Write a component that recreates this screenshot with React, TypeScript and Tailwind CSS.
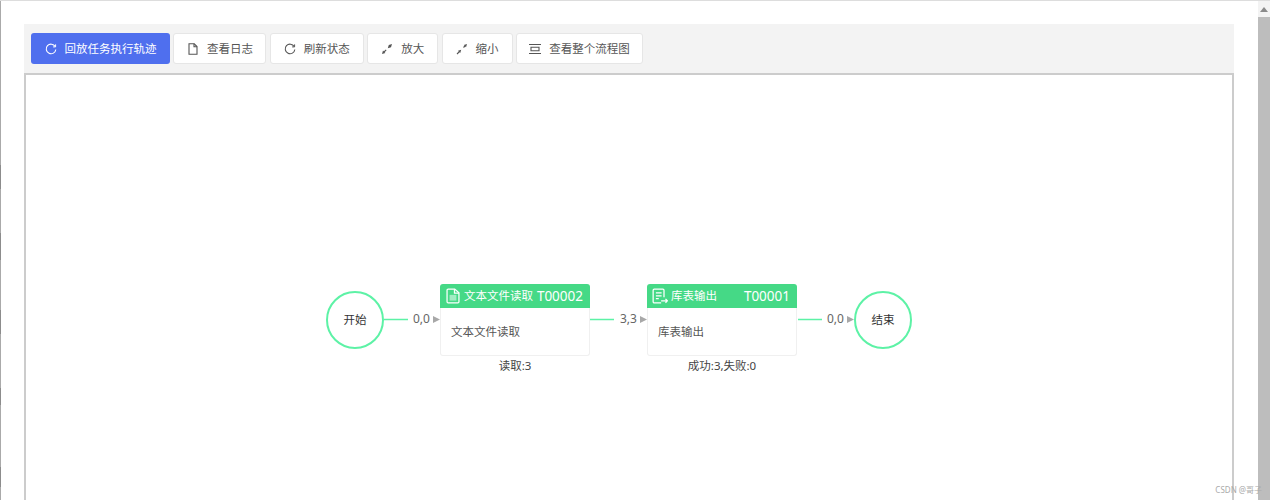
const cjk = { fontFamily: '"Noto Sans", "Noto Sans CJK SC", sans-serif' };

function ReloadIcon({ className }: { className: string }) {
  return (
    <svg viewBox="0 0 12 12" className={className} fill="none" stroke="currentColor" strokeWidth="1.100">
      <path d="M10.2 3.6A4.8 4.8 0 1 0 10.8 6.5" />
      <path d="M10.6 1.4v2.5H8.1" strokeWidth="1" />
    </svg>
  );
}

function FileIcon({ className }: { className: string }) {
  return (
    <svg viewBox="0 0 12 12" className={className} fill="none" stroke="currentColor" strokeWidth="1.100">
      <path d="M2 .8h5.2L10 3.6v7.6H2z" />
      <path d="M7 .8v3h3" />
    </svg>
  );
}

function ZoomInIcon({ className }: { className: string }) {
  return (
    <svg viewBox="0 0 12 12" className={className} fill="currentColor">
      <path d="M1 11l1-3.400L4.400 10zM6.800 5.200L7.800 2 11 1 10 4.200z" />
      <path d="M3 9l2.200-2.200" stroke="currentColor" strokeWidth="1.100" />
    </svg>
  );
}

function ZoomOutIcon({ className }: { className: string }) {
  return (
    <svg viewBox="0 0 12 12" className={className} fill="currentColor">
      <path d="M5.200 6.800L2 7.800 4.200 10zM11 1L7.800 2 10 4.200z" />
      <path d="M3.500 8.500L1 11M9 3L7.500 4.500" stroke="currentColor" strokeWidth="1.100" />
    </svg>
  );
}

function FitIcon({ className }: { className: string }) {
  return (
    <svg viewBox="0 0 12 12" className={className} fill="none" stroke="currentColor" strokeWidth="1.100">
      <path d="M0 1.500h12M0 10.500h12M2 4.200h8v3.600H2z" />
    </svg>
  );
}

function DocIcon({ className }: { className: string }) {
  return (
    <svg viewBox="0 0 14 14" className={className} fill="none" stroke="currentColor" strokeWidth="1.100">
      <path d="M1.800 2a1 1 0 0 1 1-1h5.700l3.700 3.200V12a1 1 0 0 1-1 1H2.800a1 1 0 0 1-1-1z" />
      <path d="M8.300 1v3.400h3.900" />
      <path d="M4 6h6v5H4z" fill="currentColor" fillOpacity="0.5" stroke="none" />
    </svg>
  );
}

function OutputIcon({ className }: { className: string }) {
  return (
    <svg viewBox="0 0 14 14" className={className} fill="none" stroke="currentColor" strokeWidth="1.100">
      <path d="M8 13H2a1 1 0 0 1-1-1V2a1 1 0 0 1 1-1h7.500a1 1 0 0 1 1 1v6" />
      <path d="M3.400 4.200h5M3.400 6.800h5M3.400 9.400h2.500" />
      <path d="M8 11.200h5.500M11.800 9.500l1.700 1.700-1.700 1.700" />
    </svg>
  );
}

const buttons = [
  { label: "回放任务执行轨迹", Icon: ReloadIcon, w: "w-[139px]", primary: true },
  { label: "查看日志", Icon: FileIcon, w: "w-[93px]" },
  { label: "刷新状态", Icon: ReloadIcon, w: "w-[94px]" },
  { label: "放大", Icon: ZoomInIcon, w: "w-[71px]" },
  { label: "缩小", Icon: ZoomOutIcon, w: "w-[71px]" },
  { label: "查看整个流程图", Icon: FitIcon, w: "w-[127px]" },
];

function Toolbar() {
  return (
    <div className="flex h-[49px] shrink-0 items-start gap-[3.400px] bg-[#f3f3f3] pl-[7px] pt-[9px]">
      {buttons.map(({ label, Icon, w, primary }) => (
        <button
          key={label}
          className={
            primary
              ? `flex h-[31px] ${w} items-center justify-center gap-[8px] rounded-[3px] bg-[#4f6fee] text-[11.500px] text-white`
              : `flex h-[31px] ${w} items-center justify-center gap-[8px] rounded-[3px] border border-[#e6e6e6] bg-white text-[11.500px] text-[#555]`
          }
        >
          <Icon className="h-[12px] w-[12px]" />
          <span>{label}</span>
        </button>
      ))}
    </div>
  );
}

function Circle({ label, className }: { label: string; className: string }) {
  return (
    <div
      className={`absolute top-[216px] flex h-[58px] w-[58px] items-center justify-center rounded-full border-2 border-[#5df2a6] bg-white text-[11.500px] text-[#333] ${className}`}
    >
      {label}
    </div>
  );
}

function TaskNode({
  title,
  code,
  body,
  stat,
  icon,
  className,
}: {
  title: string;
  code: string;
  body: string;
  stat: string;
  icon: React.ReactNode;
  className: string;
}) {
  return (
    <div className={`absolute top-[209px] w-[150px] ${className}`}>
      <div className="flex h-[24px] items-center rounded-t-[3px] bg-[#45d986] pl-[5px] pr-[7px] text-white">
        {icon}
        <span className="ml-[3px] flex-1 whitespace-nowrap text-[11.500px]">{title}</span>
        <span className="text-[13.500px]">{code}</span>
      </div>
      <div className="flex h-[48px] items-center rounded-b-[3px] border border-t-0 border-[#f0f0f0] bg-white pl-[10px] text-[11.500px] text-[#555]">
        {body}
      </div>
      <div className="mt-[1px] text-center text-[11.500px] text-[#444]">{stat}</div>
    </div>
  );
}

function EdgeLabel({ text, className }: { text: string; className: string }) {
  return (
    <div className={`absolute top-[236px] flex items-center gap-[3px] text-[12px] leading-[16px] text-[#666] ${className}`}>
      <span>{text}</span>
      <svg viewBox="0 0 7 7" className="h-[7px] w-[7px]" fill="#a8a8a8">
        <path d="M0 0l7 3.500L0 7z" />
      </svg>
    </div>
  );
}

function Diagram() {
  return (
    <div className="relative min-h-0 flex-1 overflow-hidden border-2 border-b-0 border-[#cccccc] bg-white">
      <svg className="absolute left-0 top-0 h-full w-full">
        <path d="M358 244.500H382M564 244.500H588M772 244.500H796" stroke="#5df2a6" strokeWidth="1.500" fill="none" />
      </svg>
      <Circle label="开始" className="left-[300px]" />
      <EdgeLabel text="0,0" className="left-[387px]" />
      <TaskNode
        title="文本文件读取"
        code="T00002"
        body="文本文件读取"
        stat="读取:3"
        icon={<DocIcon className="h-[16px] w-[16px] shrink-0" />}
        className="left-[414px]"
      />
      <EdgeLabel text="3,3" className="left-[594px]" />
      <TaskNode
        title="库表输出"
        code="T00001"
        body="库表输出"
        stat="成功:3,失败:0"
        icon={<OutputIcon className="h-[16px] w-[16px] shrink-0" />}
        className="left-[621px]"
      />
      <EdgeLabel text="0,0" className="left-[801px]" />
      <Circle label="结束" className="left-[828px]" />
    </div>
  );
}

function Scrollbar() {
  return (
    <div className="flex w-[12px] shrink-0 flex-col bg-[#bdbdbd]">
      <div className="flex h-[16px] items-center justify-center bg-[#f3f3f3]">
        <svg viewBox="0 0 8 5" className="h-[5px] w-[8px]" fill="#8a8a8a">
          <path d="M4 0l4 5H0z" />
        </svg>
      </div>
    </div>
  );
}

// darker bits of the window behind, showing along the left edge
const edgeMarks = ["top-[164px] h-[24px]", "top-[232px] h-[27px]", "top-[309px] h-[24px]", "top-[387px] h-[17px]", "top-[466px] h-[20px]"];

export default function App() {
  return (
    <div className="relative flex h-[500px] w-[1270px] overflow-hidden border-t border-[#dddddd] bg-white" style={cjk}>
      <div className="flex min-w-0 flex-1 flex-col border-l border-[#aaaaaa] pl-[23px] pr-[24px] pt-[23px]">
        <Toolbar />
        <Diagram />
      </div>
      <Scrollbar />
      {edgeMarks.map((m) => (
        <div key={m} className={`absolute left-0 w-[1px] bg-[#8c8c8c] ${m}`} />
      ))}
      <div className="absolute bottom-[4px] right-[8px] text-[8px] text-[#aaaaaa]">CSDN @哥子</div>
    </div>
  );
}
